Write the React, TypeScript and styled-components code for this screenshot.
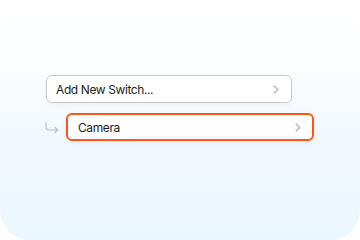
import React from "react";
import styled, { createGlobalStyle } from "styled-components";

const Global = createGlobalStyle`
  html, body { margin: 0; padding: 0; background: #ffffff; }
  body { font-family: Inter, "Noto Sans", sans-serif; }
`;

const Card = styled.div`
  width: 360px;
  height: 240px;
  box-sizing: border-box;
  border-radius: 30px;
  background: linear-gradient(180deg, #ffffff 0%, #fbfdff 30%, #f0f8fe 62%, #ebf7fe 100%);
  padding: 75px 0 0 46px;
  display: flex;
  flex-direction: column;
  gap: 10px;
`;

const Field = styled.div<{ $active?: boolean; $width: number }>`
  width: ${(p) => p.$width}px;
  height: 28px;
  box-sizing: border-box;
  border: ${(p) => (p.$active ? "2px solid #ff5319" : "1px solid #c9c9c9")};
  border-radius: 6px;
  background: #ffffff;
  box-shadow: 0 2px 6px rgba(40, 60, 90, 0.06);
  display: flex;
  align-items: center;
  justify-content: space-between;
  padding: 0 ${(p) => (p.$active ? 11 : 12)}px 0 ${(p) => (p.$active ? 10 : 9)}px;
  font-size: 12px;
  color: #1c1c1c;
  letter-spacing: -0.4px;
`;

const SubRow = styled.div`
  display: flex;
  align-items: center;
  gap: 7px;
`;

const Chevron = () => (
  <svg width="6" height="9" viewBox="0 0 6 9">
    <path d="M1 0.8 L4.8 4.5 L1 8.2" fill="none" stroke="#a9a9a9" strokeWidth="1.1" strokeLinecap="round" strokeLinejoin="round" />
  </svg>
);

const BranchArrow = () => (
  <svg width="14" height="11" viewBox="0 0 14 11" style={{ marginLeft: -1, marginTop: 1 }}>
    <path d="M1 0.5 V5 Q1 8 4 8 H12.5" fill="none" stroke="#bcbcbc" strokeWidth="1.1" strokeLinecap="round" />
    <path d="M10 5.5 L12.8 8 L10 10.5" fill="none" stroke="#bcbcbc" strokeWidth="1.1" strokeLinecap="round" strokeLinejoin="round" />
  </svg>
);

export default function App() {
  return (
    <>
      <Global />
      <Card>
        <Field $width={246}>
          <span>Add New Switch...</span>
          <Chevron />
        </Field>
        <SubRow>
          <BranchArrow />
          <Field $active $width={248}>
            <span>Camera</span>
            <Chevron />
          </Field>
        </SubRow>
      </Card>
    </>
  );
}
